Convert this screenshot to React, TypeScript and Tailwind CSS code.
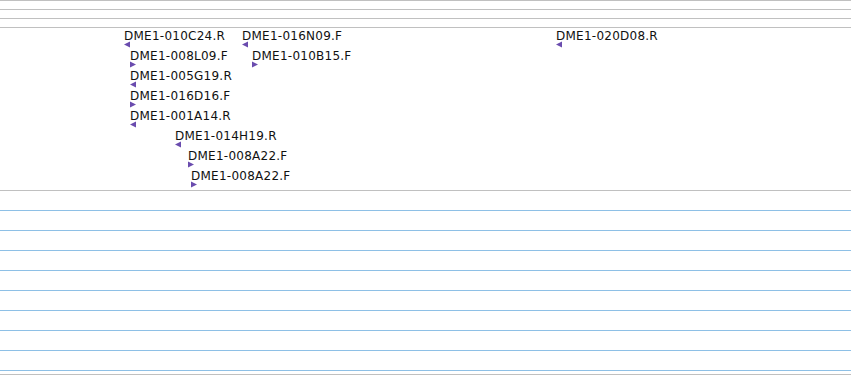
import React from "react";

type Feat = { label: string; x: number; row: number; dir: "L" | "R" };

const feats: Feat[] = [
  { label: "DME1-010C24.R", x: 124, row: 0, dir: "L" },
  { label: "DME1-016N09.F", x: 242, row: 0, dir: "L" },
  { label: "DME1-020D08.R", x: 556, row: 0, dir: "L" },
  { label: "DME1-008L09.F", x: 130, row: 1, dir: "R" },
  { label: "DME1-010B15.F", x: 252, row: 1, dir: "R" },
  { label: "DME1-005G19.R", x: 130, row: 2, dir: "L" },
  { label: "DME1-016D16.F", x: 130, row: 3, dir: "R" },
  { label: "DME1-001A14.R", x: 130, row: 4, dir: "L" },
  { label: "DME1-014H19.R", x: 175, row: 5, dir: "L" },
  { label: "DME1-008A22.F", x: 188, row: 6, dir: "R" },
  { label: "DME1-008A22.F", x: 191, row: 7, dir: "R" },
];

function Arrow({ dir }: { dir: "L" | "R" }) {
  return (
    <svg width="6" height="7" viewBox="0 0 6 7" className="block -mt-[2px]">
      {dir === "L" ? (
        <polygon points="0,3.5 6,0.5 6,6.5" fill="#6a4cae" />
      ) : (
        <polygon points="0,0.5 6,3.5 0,6.5" fill="#6a4cae" />
      )}
    </svg>
  );
}

export default function App() {
  return (
    <div
      className="w-[851px] h-[375px] bg-white overflow-hidden"
      style={{ fontFamily: '"DejaVu Sans", sans-serif' }}
    >
      <div className="h-[9px] border-t border-[#c0c0c0]" />
      <div className="h-[9px] border-t border-[#c0c0c0]" />
      <div className="h-[9px] border-t border-[#c0c0c0]" />
      <div className="relative h-[163px] border-t border-[#c0c0c0]">
        {feats.map((f, i) => (
          <div
            key={i}
            className="absolute"
            style={{ left: f.x, top: 1 + f.row * 20 }}
          >
            <span className="block text-[12px] leading-[14px] tracking-[0.25px] text-[#111] whitespace-nowrap">
              {f.label}
            </span>
            <Arrow dir={f.dir} />
          </div>
        ))}
      </div>
      <div className="h-[20px] border-t border-[#c0c0c0]" />
      <div className="h-[20px] border-t border-[#8ec0e6]" />
      <div className="h-[20px] border-t border-[#8ec0e6]" />
      <div className="h-[20px] border-t border-[#8ec0e6]" />
      <div className="h-[20px] border-t border-[#8ec0e6]" />
      <div className="h-[20px] border-t border-[#8ec0e6]" />
      <div className="h-[20px] border-t border-[#8ec0e6]" />
      <div className="h-[20px] border-t border-[#8ec0e6]" />
      <div className="h-[20px] border-t border-[#8ec0e6]" />
      <div className="h-[4px] border-t border-[#8ec0e6]" />
      <div className="h-[1px] border-t border-[#c0c0c0]" />
    </div>
  );
}
